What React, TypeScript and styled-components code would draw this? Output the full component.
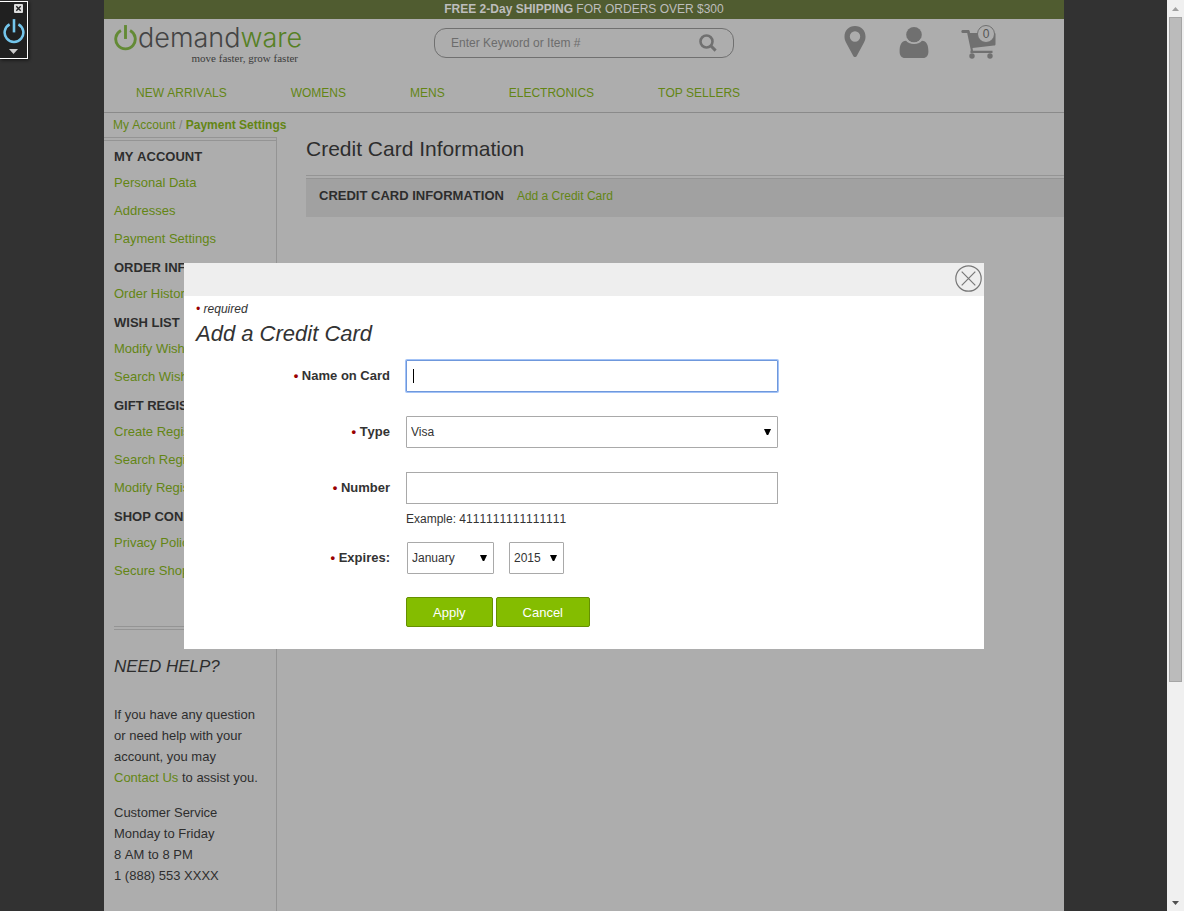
import React, { useState } from "react";
import styled, { createGlobalStyle } from "styled-components";

const green = "#638514";
const ink = "#2d2d2d";
const line = "#949494";
const icon = "#707070";

const GlobalStyle = createGlobalStyle`
  *, *::before, *::after { box-sizing: border-box; }
  body {
    margin: 0;
    background: #323232;
    color: ${ink};
    font: 13px/21px Arial, "Liberation Sans", sans-serif;
    font-kerning: none;
  }
  h1, h2, h3, p, ul { margin: 0; padding: 0; }
  ul { list-style: none; }
  a { color: ${green}; text-decoration: none; }
  input, select, button { font-family: inherit; margin: 0; }
`;

const Shell = styled.div`
  display: flex;
  height: 100vh;
  overflow: hidden;
`;

const Viewport = styled.div`
  position: relative;
  flex: 1;
  min-width: 0;
  display: flex;
  justify-content: center;
  padding-left: 1px;
  overflow: hidden;
`;

const Page = styled.div`
  flex: 1;
  max-width: 960px;
  min-height: 100%;
  display: flex;
  flex-direction: column;
  background: #adadad;
`;

const Promo = styled.div`
  height: 19px;
  background: #505c30;
  color: #bdbdbd;
  font-size: 12px;
  line-height: 19px;
  text-align: center;
`;

const Header = styled.header`
  border-bottom: 1px solid #8a8a8a;
`;

const HeaderRow = styled.div`
  display: grid;
  grid-template-columns: 1fr 300px 1fr;
  height: 55px;
`;

const Brand = styled.a`
  position: relative;
  display: flex;
  align-items: flex-start;
  width: 184px;
  height: 46px;
  margin-left: 10px;
  padding-top: 6px;
  color: #444;
  svg { flex: none; }
`;

const Wordmark = styled.span`
  margin-left: 1px;
  font: 300 27px/25px Inter, sans-serif;
  b { font-weight: 300; color: #568024; }
`;

const Tagline = styled.span`
  position: absolute;
  right: 0;
  bottom: 0;
  color: #3c3c3c;
  font: 11px/14px "Liberation Serif", serif;
  white-space: nowrap;
`;

const SearchForm = styled.form`
  display: flex;
  align-items: center;
  height: 30px;
  margin-top: 9px;
  padding: 0 16px;
  border: 1px solid #707070;
  border-radius: 12px;
`;

const SearchInput = styled.input`
  flex: 1;
  min-width: 0;
  padding: 0;
  border: 0;
  outline: 0;
  background: transparent;
  color: ${ink};
  font-size: 12px;
  &::placeholder { color: #6c6c6c; opacity: 1; }
`;

const IconButton = styled.button`
  display: flex;
  padding: 0;
  border: 0;
  background: none;
  cursor: pointer;
`;

const UserLinks = styled.div`
  display: flex;
  justify-content: flex-end;
  gap: 32px;
  padding: 6px 68px 0 0;
`;

const IconLink = styled.a`
  position: relative;
  display: block;
  height: 36px;
`;

const CartCount = styled.span`
  position: absolute;
  top: 0;
  right: 1px;
  width: 18px;
  height: 18px;
  border: 1px solid ${icon};
  border-radius: 50%;
  background: #adadad;
  color: #555;
  font-size: 12px;
  line-height: 17px;
  text-align: center;
`;

const MainNav = styled.nav`
  display: flex;
  gap: 64px;
  height: 38px;
  padding-left: 32px;
  font-size: 12px;
  line-height: 38px;
  white-space: nowrap;
`;

const Breadcrumb = styled.nav`
  height: 24px;
  padding-left: 9px;
  color: #808080;
  font-size: 12px;
  line-height: 24px;
`;

const Columns = styled.div`
  flex: 1;
  display: flex;
`;

const Sidebar = styled.aside`
  flex: 0 0 173px;
  border-top: 1px solid ${line};
  border-right: 1px solid ${line};
  padding-top: 2px;
`;

const SidebarInner = styled.div`
  border-top: 1px solid ${line};
  padding: 4px 8px 0 10px;
`;

const NavGroup = styled.section`
  margin-bottom: 3px;
  white-space: nowrap;
  li { line-height: 28px; }
`;

const GroupTitle = styled.h3`
  font-size: 13px;
  line-height: 24px;
`;

const DoubleRule = styled.hr`
  height: 4px;
  margin: 0;
  border: solid ${line};
  border-width: 1px 0;
`;

const Help = styled.section`
  padding-top: 38px;
  p { margin-bottom: 14px; }
`;

const HelpTitle = styled.h2`
  margin: 23px 0;
  font-size: 17px;
  font-style: italic;
  font-weight: 400;
  line-height: 28px;
`;

const ContactLink = styled.a`
  white-space: nowrap;
`;

const Main = styled.main`
  flex: 1;
  min-width: 0;
  padding-left: 29px;
`;

const PageTitle = styled.h1`
  font-size: 21px;
  font-weight: 400;
  line-height: 24px;
  padding-bottom: 14px;
`;

const CardPanel = styled.section`
  display: flex;
  align-items: center;
  gap: 13px;
  height: 38px;
  padding: 0 13px 4px;
  background: #a1a1a1;
  font-size: 12px;
`;

const Overlay = styled.div`
  position: absolute;
  inset: 0 0 0 1px;
  display: flex;
  align-items: center;
  justify-content: center;
`;

const Dialog = styled.div`
  width: 800px;
  max-width: 100%;
  background: #fff;
  color: #333;
`;

const DialogBar = styled.div`
  display: flex;
  justify-content: flex-end;
  height: 33px;
  padding: 2px;
  background: #eee;
`;

const DialogBody = styled.form`
  padding: 4px 12px 22px;
`;

const RequiredNote = styled.p`
  font-size: 12px;
  font-style: italic;
  line-height: 18px;
`;

const Dot = styled.span`
  color: #900;
`;

const DialogTitle = styled.h2`
  margin-bottom: 11px;
  font-size: 22px;
  font-style: italic;
  font-weight: 400;
  line-height: 31px;
`;

const Field = styled.div<{ $gap: number }>`
  display: grid;
  grid-template-columns: 194px minmax(0, 372px);
  column-gap: 16px;
  margin-bottom: ${(p) => p.$gap}px;
`;

const Label = styled.label`
  font-size: 13px;
  font-weight: 700;
  line-height: 32px;
  text-align: right;
`;

const Control = styled.div`
  position: relative;
`;

const TextInput = styled.input`
  display: block;
  width: 100%;
  height: 32px;
  padding: 0 7px;
  border: 1px solid #a9a9a9;
  background: #fff;
  color: #333;
  font-size: 12px;
  outline: 0;
  &:focus {
    border-color: #6f98dc;
    box-shadow: 0 0 0 1px #a3c3f7;
    border-radius: 1px;
  }
  &:focus:placeholder-shown { caret-color: transparent; }
`;

const Caret = styled.span`
  position: absolute;
  top: 9px;
  left: 7px;
  width: 1px;
  height: 14px;
  background: #000;
  pointer-events: none;
`;

const SelectWrap = styled.div<{ $width: string }>`
  position: relative;
  width: ${(p) => p.$width};
  svg {
    position: absolute;
    top: 13px;
    right: 7px;
    pointer-events: none;
  }
`;

const SelectBox = styled.select`
  appearance: none;
  display: block;
  width: 100%;
  height: 32px;
  padding: 0 4px;
  border: 1px solid #a9a9a9;
  border-radius: 1px;
  background: #fff;
  color: #333;
  font-size: 12px;
`;

const Example = styled.p`
  padding-top: 5px;
  font-size: 12px;
  line-height: 20px;
`;

const DateRow = styled.div`
  display: flex;
  gap: 15px;
  padding-left: 1px;
`;

const Actions = styled.div`
  display: flex;
  gap: 3px;
  padding-left: 210px;
`;

const ActionButton = styled.button`
  height: 30px;
  padding: 1px 26px 0;
  border: 1px solid #659000;
  border-radius: 2px;
  background: #84bd00;
  color: #fff;
  font-size: 13px;
  cursor: pointer;
`;

const ToolWidget = styled.div`
  position: fixed;
  top: 1px;
  left: 0;
  display: flex;
  flex-direction: column;
  align-items: center;
  width: 28px;
  height: 58px;
  border: 1px solid #fff;
  border-left: 0;
  background: #202020;
  box-shadow: 1px 1px 3px #111;
`;

const WidgetClose = styled(IconButton)`
  align-self: flex-end;
  margin: 2px 4px 6px 0;
`;

const ScrollTrack = styled.div`
  flex: 0 0 17px;
  display: flex;
  flex-direction: column;
  align-items: center;
  background: #f0f0f0;
`;

const ScrollThumb = styled.div`
  flex: 665;
  width: 13px;
  border: 1px solid #a5a5a5;
  background: #bbb;
`;

const ScrollSpace = styled.div`
  flex: 213;
`;

const ScrollEnd = styled.div`
  display: flex;
  align-items: center;
  justify-content: center;
  height: 17px;
`;

const navGroups = [
  { title: "MY ACCOUNT", links: ["Personal Data", "Addresses", "Payment Settings"] },
  { title: "ORDER INFORMATION", links: ["Order History"] },
  { title: "WISH LIST", links: ["Modify Wish List", "Search Wish Lists"] },
  { title: "GIFT REGISTRIES", links: ["Create Registry", "Search Registries", "Modify Registries"] },
  { title: "SHOP CONFIDENTLY", links: ["Privacy Policy", "Secure Shopping"] },
];

const categories = ["NEW ARRIVALS", "WOMENS", "MENS", "ELECTRONICS", "TOP SELLERS"];

function Power({ size, color, width }: { size: number; color: string; width: number }) {
  return (
    <svg width={size} height={size + 3} viewBox="0 0 24 27" fill="none" stroke={color} strokeWidth={width}>
      <path d="M7.2 5.7A10.2 10.2 0 1 0 16.8 5.7" />
      <path d="M12 0v14.5" />
    </svg>
  );
}

function SelectField(props: { id: string; width: string; options: string[]; label?: string }) {
  return (
    <SelectWrap $width={props.width}>
      <SelectBox id={props.id} aria-label={props.label}>
        {props.options.map((o) => (
          <option key={o}>{o}</option>
        ))}
      </SelectBox>
      <svg width="7" height="6" viewBox="0 0 7 6">
        <path d="M0 0H7L4.2 6H2.8Z" fill="#000" />
      </svg>
    </SelectWrap>
  );
}

export default function App() {
  const [name, setName] = useState("");

  return (
    <>
      <GlobalStyle />
      <Shell>
        <Viewport>
          <Page>
            <Promo>
              <b>FREE 2-Day SHIPPING</b> FOR ORDERS OVER $300
            </Promo>
            <Header>
              <HeaderRow>
                <Brand href="#" aria-label="demandware">
                  <Power size={23} color="#638a35" width={3} />
                  <Wordmark>
                    demand<b>ware</b>
                  </Wordmark>
                  <Tagline>move faster, grow faster</Tagline>
                </Brand>
                <SearchForm onSubmit={(e) => e.preventDefault()}>
                  <SearchInput type="text" aria-label="Search" placeholder="Enter Keyword or Item #" />
                  <IconButton type="submit" aria-label="Go">
                    <svg width="18" height="18" viewBox="0 0 18 18" fill="none" stroke={icon}>
                      <circle cx="7.5" cy="7.5" r="6" strokeWidth="2.6" />
                      <path d="M11.8 11.8L16.6 16.6" strokeWidth="3" />
                    </svg>
                  </IconButton>
                </SearchForm>
                <UserLinks>
                  <IconLink href="#" aria-label="Stores">
                    <svg width="24" height="34" viewBox="0 0 24 34">
                      <path
                        fill={icon}
                        fillRule="evenodd"
                        d="M12 1C5.8 1 1.500 5.300 1.500 11.500C1.500 14 2 15.500 3 17.500L10 30.500C11 32.500 13 32.500 14 30.500L21 17.500C22 15.500 22.500 14 22.500 11.500C22.500 5.300 18.200 1 12 1ZM12 6.300A5.200 5.200 0 1 1 12 16.700A5.200 5.200 0 0 1 12 6.300Z"
                      />
                    </svg>
                  </IconLink>
                  <IconLink href="#" aria-label="Account">
                    <svg width="30" height="34" viewBox="0 0 30 34" fill={icon}>
                      <circle cx="15" cy="9.700" r="7.800" />
                      <path d="M7 15.700C9 17.800 12 19 15 19S21 17.800 23 15.700C27.500 15.700 29.400 20 29.400 26.500C29.400 30.500 27.500 33 24 33H6C2.500 33 0.600 30.500 0.600 26.500C0.600 20 2.500 15.700 7 15.700Z" />
                      <path d="M7.500 13.500C9 16.700 12 18 15 18S21 16.700 22.500 13.500" fill="none" stroke="#adadad" strokeWidth="1.200" />
                    </svg>
                  </IconLink>
                  <IconLink href="#" aria-label="Cart">
                    <svg width="35" height="36" viewBox="0 0 35 36" fill={icon}>
                      <path d="M1.500 5H7.200C8 5 8.500 5.500 8.700 6.300L9 8H33.500C34.200 8 34.500 8.500 34.500 9V19C34.500 20 34 20.500 33 20.600L11.500 23L12 25.800H31.500V28H10.500C9.500 28 9.200 27.500 9.400 26.500L9.800 25L6.200 8H1.500C0 8 0 5 1.500 5Z" />
                      <circle cx="11" cy="31" r="2.700" />
                      <circle cx="29" cy="31" r="2.700" />
                    </svg>
                    <CartCount>0</CartCount>
                  </IconLink>
                </UserLinks>
              </HeaderRow>
              <MainNav>
                {categories.map((c) => (
                  <a key={c} href="#">
                    {c}
                  </a>
                ))}
              </MainNav>
            </Header>
            <Breadcrumb>
              <a href="#">My Account</a> /{" "}
              <a href="#">
                <b>Payment Settings</b>
              </a>
            </Breadcrumb>
            <Columns>
              <Sidebar>
                <SidebarInner>
                  {navGroups.map((g) => (
                    <NavGroup key={g.title}>
                      <GroupTitle>{g.title}</GroupTitle>
                      <ul>
                        {g.links.map((l) => (
                          <li key={l}>
                            <a href="#">{l}</a>
                          </li>
                        ))}
                      </ul>
                    </NavGroup>
                  ))}
                  <Help>
                    <DoubleRule />
                    <HelpTitle>NEED HELP?</HelpTitle>
                    <p>
                      If you have any question or need help with your account, you may{" "}
                      <ContactLink href="#">Contact Us</ContactLink> to assist you.
                    </p>
                    <p>
                      Customer Service
                      <br />
                      Monday to Friday
                      <br />8 AM to 8 PM
                      <br />1 (888) 553 XXXX
                    </p>
                  </Help>
                </SidebarInner>
              </Sidebar>
              <Main>
                <PageTitle>Credit Card Information</PageTitle>
                <DoubleRule />
                <CardPanel>
                  <GroupTitle>CREDIT CARD INFORMATION</GroupTitle>
                  <a href="#">Add a Credit Card</a>
                </CardPanel>
              </Main>
            </Columns>
          </Page>
          <Overlay>
            <Dialog role="dialog" aria-labelledby="dialog-title">
              <DialogBar>
                <IconButton type="button" aria-label="Close">
                  <svg width="27" height="27" viewBox="0 0 27 27" fill="none" stroke="#777" strokeWidth="1.200">
                    <circle cx="13.500" cy="13.500" r="12.700" />
                    <path d="M6.700 6.700L20.300 20.300M20.300 6.700L6.700 20.300" />
                  </svg>
                </IconButton>
              </DialogBar>
              <DialogBody onSubmit={(e) => e.preventDefault()}>
                <RequiredNote>
                  <Dot>•</Dot> required
                </RequiredNote>
                <DialogTitle id="dialog-title">Add a Credit Card</DialogTitle>
                <Field $gap={24}>
                  <Label htmlFor="owner">
                    <Dot>•</Dot> Name on Card
                  </Label>
                  <Control>
                    <TextInput
                      id="owner"
                      type="text"
                      placeholder=" "
                      autoFocus
                      value={name}
                      onChange={(e) => setName(e.target.value)}
                    />
                    {name === "" && <Caret />}
                  </Control>
                </Field>
                <Field $gap={24}>
                  <Label htmlFor="type">
                    <Dot>•</Dot> Type
                  </Label>
                  <SelectField id="type" width="100%" options={["Visa", "MasterCard", "Amex", "Discover"]} />
                </Field>
                <Field $gap={13}>
                  <Label htmlFor="number">
                    <Dot>•</Dot> Number
                  </Label>
                  <Control>
                    <TextInput id="number" type="text" />
                    <Example>Example: 4111111111111111</Example>
                  </Control>
                </Field>
                <Field $gap={23}>
                  <Label htmlFor="month">
                    <Dot>•</Dot> Expires:
                  </Label>
                  <DateRow>
                    <SelectField id="month" width="87px" options={["January", "February", "March"]} />
                    <SelectField id="year" label="Year" width="55px" options={["2015", "2016", "2017"]} />
                  </DateRow>
                </Field>
                <Actions>
                  <ActionButton type="submit">Apply</ActionButton>
                  <ActionButton type="button">Cancel</ActionButton>
                </Actions>
              </DialogBody>
            </Dialog>
          </Overlay>
        </Viewport>
        <ScrollTrack aria-hidden="true">
          <ScrollEnd>
            <svg width="7" height="4" viewBox="0 0 7 4">
              <path d="M0 4L3.500 0L7 4Z" fill="#a0a0a0" />
            </svg>
          </ScrollEnd>
          <ScrollThumb />
          <ScrollSpace />
          <ScrollEnd>
            <svg width="7" height="4" viewBox="0 0 7 4">
              <path d="M0 0H7L3.500 4Z" fill="#505050" />
            </svg>
          </ScrollEnd>
        </ScrollTrack>
      </Shell>
      <ToolWidget>
        <WidgetClose type="button" aria-label="Hide toolkit">
          <svg width="9" height="9" viewBox="0 0 9 9">
            <rect width="9" height="9" rx="1" fill="#ddd" />
            <path d="M2.300 2.300L6.700 6.700M6.700 2.300L2.300 6.700" stroke="#222" strokeWidth="1.400" />
          </svg>
        </WidgetClose>
        <Power size={22} color="#74c6ec" width={2.8} />
        <svg width="9" height="14" viewBox="0 0 9 14">
          <path d="M0 5H9L4.500 10Z" fill="#ccc" />
        </svg>
      </ToolWidget>
    </>
  );
}
